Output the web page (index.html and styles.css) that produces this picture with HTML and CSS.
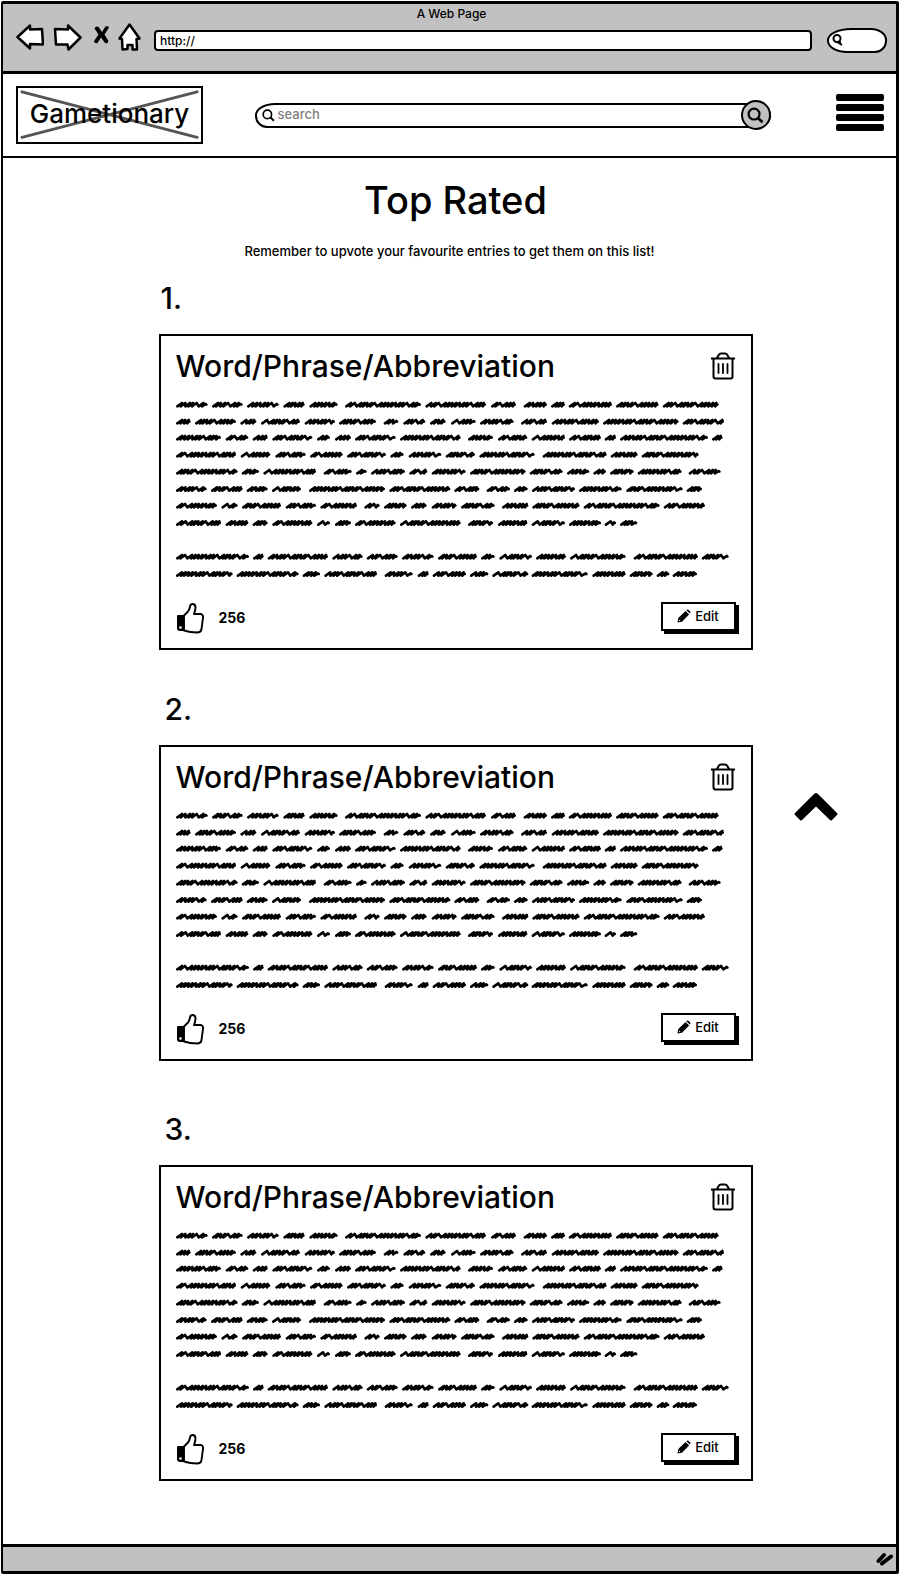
FILE: index.html
```html
<!DOCTYPE html>
<html lang="en">
<head>
<meta charset="utf-8">
<meta name="viewport" content="width=device-width, initial-scale=1">
<title>A Web Page</title>
<link rel="stylesheet" href="styles.css">
</head>
<body>
<svg class="defs" aria-hidden="true">
  <symbol id="trash" viewBox="0 0 26 28">
    <g fill="none" stroke="#000" stroke-width="2" stroke-linejoin="round" stroke-linecap="round">
      <path d="M1 6.500H25" stroke-linecap="butt"/>
      <path d="M7 6L9 2.500Q9.500 1.500 11 1.500H15Q16.500 1.500 17 2.500L19 6"/>
      <path d="M3.500 7V24.500Q3.500 26.500 5.500 26.500H20.500Q22.500 26.500 22.500 24.500V7"/>
      <path d="M8.500 12V21M13 12V21M17.500 12V21" stroke-width="1.800"/>
    </g>
  </symbol>
  <symbol id="thumb" viewBox="0 0 28 31">
    <path d="M1 13Q1 12 2 12H8V28H4Q1 28 1 25Z"/>
    <path d="M8 12.500L12 8.500Q13.500 6.500 14 3.500Q14.500 1 16.500 1Q19.500 1 19.500 4.500Q19.500 7 18 11H24Q27.500 11 27 15L25.500 26Q25 29.500 21 29.500Q14 29.500 8 27.500Z" fill="#fff" stroke="#000" stroke-width="1.900" stroke-linejoin="round"/>
    <circle cx="4.500" cy="24.500" r="1.300" fill="#fff"/>
  </symbol>
  <symbol id="pencil" viewBox="0 0 14 14">
    <path d="M0.500 13.500L1.300 9L8.600 1.900L12.100 5.400L5 12.700Z"/>
    <path d="M9.400 1.200Q10.500 0 11.700 1.100L12.900 2.300Q14 3.500 12.800 4.600Z"/>
    <path d="M1.900 12.200L2.300 10.600L3.500 11.800Z" fill="#fff"/>
  </symbol>
  <symbol id="lens" viewBox="0 0 14 14">
    <circle cx="5.800" cy="5.800" r="4.500" fill="none" stroke="#000" stroke-width="1.800"/>
    <path d="M9 9L12.800 12.600" stroke="#000" stroke-width="2.200"/>
  </symbol>
  <symbol id="scribble" viewBox="0 0 1680 546"><path id="scribble-path" fill="none" stroke="#000" stroke-width="8" stroke-linejoin="round" stroke-linecap="round"/></symbol>
</svg>

<div class="window">
  <header class="toolbar">
    <div class="window-title">A Web Page</div>
    <div class="toolbar-row">
      <div class="nav">
        <button class="icon-button" aria-label="Back"><svg width="28" height="26" viewBox="0 0 28 26"><path class="outline" d="M1.500 13L14 1.500V5.500L26 5L27 20.500L14 20V24.500Z"/></svg></button>
        <button class="icon-button" aria-label="Forward"><svg width="29" height="27" viewBox="0 0 29 27"><path class="outline" d="M2 5L15 5.500V1.500L27.500 13.500L15.500 25.500L14.500 20.500L3 20.500Z"/></svg></button>
        <button class="icon-button stop" aria-label="Stop"><svg width="17" height="20" viewBox="0 0 17 20"><path d="M1.500 3.500Q3 0.500 5.500 2L9 7L12.500 1.500Q15 0 16 2.500L11.500 9.500L15.500 16Q15 19 12 18L8 12.500L4.500 18Q1.500 19 1 16L5.500 9.500Z"/></svg></button>
        <button class="icon-button" aria-label="Home"><svg width="23" height="28" viewBox="0 0 23 28"><path class="outline" d="M11.500 1.500L21.500 15.500L18.500 16L19 26.500H14.500V22H9.500V26L4.500 26.500L4 16L1.500 15.500Z"/></svg></button>
      </div>
      <input class="address" type="text" value="http://" aria-label="Address">
      <label class="quick-search">
        <svg width="11" height="12" viewBox="0 0 11 12"><circle cx="5" cy="4.500" r="3.500" fill="#fff" stroke="#000" stroke-width="2"/><path d="M5 8L10 11M7.500 7L9 11" stroke="#000" stroke-width="1.800"/></svg>
        <input type="text" aria-label="Quick search">
      </label>
    </div>
  </header>

  <div class="site-header">
    <a class="logo" href="#">
      <svg class="logo-cross" viewBox="0 0 186 57" preserveAspectRatio="none" aria-hidden="true"><path d="M4 4L182 52M4 52L182 4" stroke="#555" stroke-width="3" stroke-linecap="round"/></svg>
      <span>Gametionary</span>
    </a>
    <form class="search">
      <svg width="13" height="13"><use href="#lens"/></svg>
      <input type="text" placeholder="search" aria-label="Search">
      <button class="search-go" type="button" aria-label="Search"><svg width="17" height="17"><use href="#lens"/></svg></button>
    </form>
    <button class="menu" aria-label="Menu"><span></span><span></span><span></span><span></span></button>
  </div>

  <main class="content">
    <h1>Top Rated</h1>
    <p class="hint">Remember to upvote your favourite entries to get them on this list!</p>
    <section class="entry">
      <div class="rank first">1.</div>
      <article class="card">
        <div class="card-head"><h2>Word/Phrase/Abbreviation</h2><button class="icon-button" aria-label="Delete"><svg width="26" height="28"><use href="#trash"/></svg></button></div>
        <svg class="scribble" viewBox="0 0 1680 546" role="img" aria-label="Entry text"><use href="#scribble"/></svg>
        <div class="card-foot"><button class="icon-button" aria-label="Upvote"><svg width="28" height="31"><use href="#thumb"/></svg></button><span class="votes">256</span><button class="edit"><svg width="14" height="14"><use href="#pencil"/></svg>Edit</button></div>
      </article>
    </section>
    <section class="entry">
      <div class="rank">2.</div>
      <article class="card">
        <div class="card-head"><h2>Word/Phrase/Abbreviation</h2><button class="icon-button" aria-label="Delete"><svg width="26" height="28"><use href="#trash"/></svg></button></div>
        <svg class="scribble" viewBox="0 0 1680 546" role="img" aria-label="Entry text"><use href="#scribble"/></svg>
        <div class="card-foot"><button class="icon-button" aria-label="Upvote"><svg width="28" height="31"><use href="#thumb"/></svg></button><span class="votes">256</span><button class="edit"><svg width="14" height="14"><use href="#pencil"/></svg>Edit</button></div>
      </article>
    </section>
    <section class="entry last">
      <div class="rank">3.</div>
      <article class="card">
        <div class="card-head"><h2>Word/Phrase/Abbreviation</h2><button class="icon-button" aria-label="Delete"><svg width="26" height="28"><use href="#trash"/></svg></button></div>
        <svg class="scribble" viewBox="0 0 1680 546" role="img" aria-label="Entry text"><use href="#scribble"/></svg>
        <div class="card-foot"><button class="icon-button" aria-label="Upvote"><svg width="28" height="31"><use href="#thumb"/></svg></button><span class="votes">256</span><button class="edit"><svg width="14" height="14"><use href="#pencil"/></svg>Edit</button></div>
      </article>
    </section>
  </main>

  <button class="icon-button to-top" aria-label="Back to top"><svg width="44" height="28" viewBox="0 0 44 28"><path d="M20.500 0.500Q22 -0.500 23.500 0.500L43 20Q44 21 43 22L38 27Q37 28 36 27L22 13.500L8 27Q7 28 6 27L1 22Q0 21 1 20Z"/></svg></button>

  <footer class="statusbar">
    <svg width="18" height="14" viewBox="0 0 18 14"><path d="M2.500 9L8 3M6 11.500L15 4.500" stroke="#000" stroke-width="4" stroke-linecap="round"/></svg>
  </footer>
</div>
<script src="scribble.js"></script>
</body>
</html>
```

FILE: styles.css
```css
* { box-sizing: border-box; }

body {
  margin: 0;
  padding: 1px;
  background: #fff;
  color: #000;
  font-family: Inter, "Open Sans", sans-serif;
  font-size: 13px;
  font-weight: 500;
  line-height: 20px;
}

button, input { font: inherit; color: inherit; }
button { cursor: pointer; }
svg { display: block; flex: none; }
.defs { position: absolute; width: 0; height: 0; }

.window {
  position: relative;
  display: flex;
  flex-direction: column;
  min-height: calc(100vh - 2px);
  border: 3px solid #000;
  border-width: 3px 3px 3px 2px;
  border-radius: 2px;
}

.icon-button { padding: 0; border: 0; background: none; }
.outline { fill: #fff; stroke: #000; stroke-width: 2.500; stroke-linejoin: round; }

.toolbar {
  height: 70px;
  padding: 0 9px 0 13px;
  background: #c1c1c1;
  border-bottom: 3px solid #000;
}
.window-title { text-align: center; line-height: 19px; font-size: 12px; }
.toolbar-row { display: flex; align-items: center; height: 28px; }
.nav { display: flex; align-items: center; gap: 9px; width: 138px; }
.stop { margin: 0 -1px 4px 2px; }
.address {
  flex: 1;
  min-width: 0;
  height: 21px;
  margin-top: 6px;
  padding: 0 4px;
  border: 2px solid #000;
  border-radius: 4px;
  background: #fff;
  font-size: 12px;
}
.quick-search {
  display: flex;
  align-items: center;
  width: 60px;
  height: 25px;
  margin: 6px 0 0 15px;
  padding-left: 3px;
  border: 2px solid #000;
  border-radius: 24px 16px 12px 20px / 12px;
  background: #fff;
}
.quick-search input { width: 36px; padding: 0; border: 0; background: none; outline: 0; }

.site-header {
  display: flex;
  align-items: center;
  justify-content: space-between;
  height: 84px;
  padding: 0 12px 0 13px;
  border-bottom: 2px solid #000;
}
.logo {
  position: relative;
  width: 187px;
  height: 58px;
  border: 2px solid #000;
  color: #000;
  font-size: 26px;
  line-height: 52px;
  text-align: center;
  text-decoration: none;
}
.logo-cross { position: absolute; inset: 0; width: 100%; height: 100%; }
.logo span { position: relative; }
.search {
  display: flex;
  align-items: center;
  flex: 1;
  max-width: 516px;
  height: 25px;
  margin: 0 14px 0 0;
  padding-left: 5px;
  border: 2px solid #000;
  border-radius: 20px 15px 15px 12px / 12px;
}
.search input { flex: 1; min-width: 0; padding: 0 3px 2px; border: 0; background: none; outline: 0; }
.search input::placeholder { color: #808080; opacity: 1; }
.search-go {
  display: flex;
  align-items: center;
  justify-content: center;
  width: 30px;
  height: 30px;
  margin-right: -2px;
  padding: 0;
  border: 2px solid #000;
  border-radius: 50%;
  background: #c1c1c1;
}
.menu {
  display: flex;
  flex-direction: column;
  gap: 3px;
  width: 48px;
  margin-bottom: 5px;
  padding: 0;
  border: 0;
  background: none;
}
.menu span { height: 7px; border-radius: 2px; background: #000; }

.content {
  flex: 1;
  width: 100%;
  max-width: 606px;
  margin: 0 auto;
  padding: 17px 0 0 12px;
}
h1, h2, p { margin: 0; font-weight: 500; }
h1 { font-size: 38px; line-height: 50px; text-align: center; }
.hint { margin: 16px 12px 17px 0; text-align: center; }
.entry { margin-bottom: 39px; }
.entry + .entry { margin-bottom: 48px; }
.entry.last { margin-bottom: 40px; }
.rank { margin-bottom: 16px; padding-left: 6px; font-size: 30px; line-height: 40px; }
.rank.first { padding-left: 2px; }
.card { padding: 9px 15px 12px; border: 2px solid #000; }
.card-head { display: flex; align-items: center; justify-content: space-between; height: 42px; }
h2 { font-size: 30px; line-height: 40px; }
.scribble { width: 100%; margin: 13px 0 18px; }
.card-foot { display: flex; align-items: center; gap: 15px; height: 36px; }
.votes { font-size: 14px; font-weight: 700; }
.edit {
  display: flex;
  align-items: center;
  justify-content: center;
  gap: 4px;
  width: 75px;
  height: 29px;
  margin: 0 0 4px auto;
  padding: 0;
  border: 2px solid #000;
  background: #fff;
  box-shadow: 3px 3px 0 #000;
}

.to-top { position: absolute; top: 789px; right: 58px; }

.statusbar {
  display: flex;
  align-items: center;
  justify-content: flex-end;
  height: 27px;
  padding-right: 2px;
  background: #c1c1c1;
  border-top: 3px solid #000;
}
```

FILE: scribble.js
```js
// Each row is a baseline followed by the start and end of every scribbled word.
const rows = [
  [14, 80,175,188,280,293,388,402,466,480,565,587,815,828,1010,1025,1100,1123,1193,1205,1247,1258,1388,1400,1528,1540,1708],
  [65, 80,124,137,260,273,321,335,452,466,557,569,680,703,747,762,828,842,889,905,979,992,1093,1115,1193,1207,1349,1361,1588,1600,1724],
  [113, 80,215,229,297,310,355,369,489,503,542,557,605,617,739,752,934,956,1031,1046,1134,1147,1247,1259,1355,1366,1400,1412,1676,1688,1720],
  [164, 80,260,274,363,378,469,482,580,593,710,723,763,778,876,889,977,990,1156,1180,1372,1384,1465,1477,1648],
  [215, 80,265,277,329,342,500,523,607,620,652,665,767,780,834,847,949,962,1129,1141,1240,1253,1320,1332,1370,1382,1453,1465,1597,1618,1714],
  [267, 80,172,185,280,292,355,368,455,479,707,720,903,915,990,1012,1082,1094,1135,1148,1277,1289,1417,1431,1600,1612,1658],
  [317, 80,203,216,265,278,395,409,500,513,623,645,691,704,772,785,832,847,922,935,1036,1058,1137,1149,1291,1303,1531,1543,1667],
  [369, 80,215,229,297,310,355,369,489,503,542,557,605,617,739,752,934,956,1031,1046,1134,1147,1247,1259,1355,1366,1400,1412,1464],
  [470, 80,299,311,343,355,536,549,640,652,745,758,853,866,983,995,1036,1050,1148,1160,1250,1262,1429,1453,1646,1657,1738],
  [522, 80,250,262,448,460,512,525,683,706,790,805,838,850,950,962,1017,1029,1137,1147,1315,1329,1429,1441,1510,1522,1560,1570,1643]
];
const steps = [10, 14, 9, 11, 20, 10, 8, 13, 9, 21, 11, 9, 12];
let path = "";
let n = 0;
for (const [y, ...edges] of rows) {
  for (let i = 0; i < edges.length; i += 2) {
    let x = edges[i] - 76;
    const end = edges[i + 1] - 84;
    path += `M${x} ${y + 5}`;
    while (x + 14 < end) {
      const step = steps[n++ % steps.length];
      path += `L${x + 14} ${y - 5}`;
      x = Math.min(x + step, end - 6);
      path += `L${x} ${y + 5}`;
      if (x >= end - 6) break;
    }
    path += `L${end - 2} ${y - 2}L${end} ${y}`;
  }
}
document.getElementById("scribble-path").setAttribute("d", path);
```
